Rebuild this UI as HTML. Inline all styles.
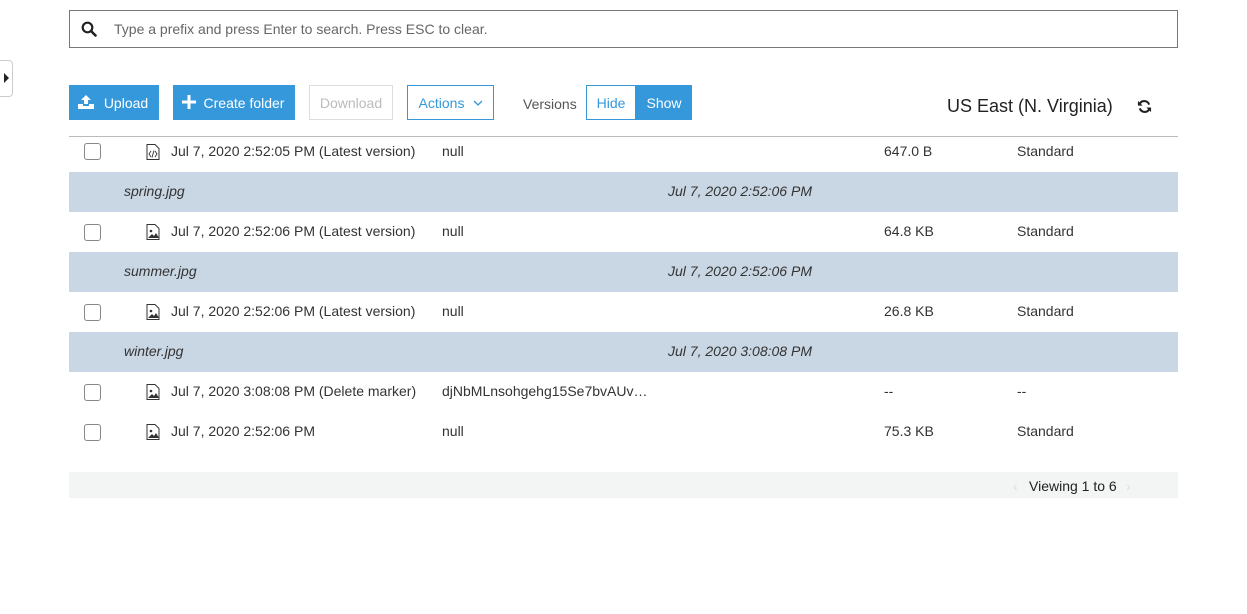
<!DOCTYPE html>
<html><head><meta charset="utf-8"><style>
*{box-sizing:border-box;margin:0;padding:0}
body{width:1247px;height:614px;background:#fff;font-family:"Liberation Sans",sans-serif;font-size:14px;color:#333;position:relative;overflow:hidden}
.a{position:absolute}
.btn{position:absolute;top:85px;height:35px;line-height:36px;font-size:14px;text-align:center}
.blue{background:#3498db;color:#fff}
.row{position:absolute;left:69px;width:1109px;height:40px;line-height:39px}
.row span{position:absolute;white-space:nowrap}
.grp{background:#c9d6e3;font-style:italic}
.cb{position:absolute;left:15px;top:12px;width:17px;height:17px;border:1px solid #888;border-radius:3px;background:#fff}
.ic{position:absolute;left:77px;top:12px}
</style></head><body>
<div class="a" style="left:0;top:60px;width:13px;height:37px;border:1px solid #ccc;border-left:none;border-radius:0 4px 4px 0"></div>
<div class="a" style="left:4px;top:73px;width:0;height:0;border-left:5px solid #222;border-top:5px solid transparent;border-bottom:5px solid transparent"></div>

<div class="a" style="left:69px;top:10px;width:1109px;height:38px;border:1px solid #777"></div>
<svg class="a" style="left:81px;top:21px" width="16" height="16" viewBox="0 0 16 16"><circle cx="6.5" cy="6.5" r="4.8" fill="none" stroke="#222" stroke-width="2.2"/><path d="M10 10l4.5 4.5" stroke="#222" stroke-width="2.6" stroke-linecap="round"/></svg>
<div class="a" style="left:114px;top:21px;color:#666;font-size:14px">Type a prefix and press Enter to search. Press ESC to clear.</div>

<div class="btn blue" style="left:69px;width:90px;padding-left:24px">Upload</div>
<svg class="a" style="left:78px;top:95px" width="16" height="14" viewBox="0 0 16 14"><path d="M8 0L3 5h3v4h4V5h3z M0 9h5v2h6V9h5v5H0z" fill="#fff"/></svg>
<div class="btn blue" style="left:173px;width:122px;padding-left:20px">Create folder</div>
<svg class="a" style="left:182px;top:95px" width="14" height="14" viewBox="0 0 14 14"><path d="M5.5 0h3v5.5H14v3H8.5V14h-3V8.5H0v-3h5.5z" fill="#fff"/></svg>
<div class="btn" style="left:309px;width:84px;border:1px solid #ddd;color:#bbb;line-height:34px">Download</div>
<div class="btn" style="left:407px;width:87px;border:1px solid #3498db;color:#3498db;line-height:34px;padding-right:18px">Actions</div>
<svg class="a" style="left:473px;top:100px" width="10" height="7" viewBox="0 0 10 7"><path d="M1 1l4 4 4-4" fill="none" stroke="#3498db" stroke-width="1.3"/></svg>
<div class="a" style="left:523px;top:96px;color:#555">Versions</div>
<div class="btn" style="left:586px;width:50px;border:1px solid #3498db;color:#3498db;line-height:34px">Hide</div>
<div class="btn blue" style="left:636px;width:56px">Show</div>
<div class="a" style="left:947px;top:96px;font-size:18px;color:#222">US East (N. Virginia)</div>
<svg class="a" style="left:1137px;top:99px" width="15" height="15" viewBox="0 0 16 16"><path d="M13 6A5.5 5.5 0 0 0 3 5" fill="none" stroke="#222" stroke-width="2.2"/><path d="M1 2v5h5z" fill="#222"/><path d="M3 10a5.5 5.5 0 0 0 10 1" fill="none" stroke="#222" stroke-width="2.2"/><path d="M15 14V9h-5z" fill="#222"/></svg>

<div class="a" style="left:69px;top:136px;width:1109px;height:1px;background:#bbb"></div>

<div class="row" style="top:131px;line-height:40px"><div class="cb"></div>
<svg class="ic" style="top:13px" width="14" height="16" viewBox="0 0 14 16"><path d="M1 .5h8l4 4v11H1z" fill="none" stroke="#333"/><path d="M5 7L3 10l2 3M9 7l2 3-2 3M8 6.5l-2 7" fill="none" stroke="#333" stroke-width=".9"/></svg>
<span style="left:102px;top:0">Jul 7, 2020 2:52:05 PM (Latest version)</span><span style="left:373px">null</span><span style="left:815px">647.0 B</span><span style="left:948px">Standard</span></div>

<div class="row grp" style="top:172px"><span style="left:55px">spring.jpg</span><span style="left:599px">Jul 7, 2020 2:52:06 PM</span></div>
<div class="row" style="top:212px"><div class="cb"></div>
<svg class="ic" width="14" height="16" viewBox="0 0 14 16"><path d="M1 .5h8l4 4v11H1z" fill="none" stroke="#333"/><circle cx="5" cy="7" r="1.3" fill="#333"/><path d="M2 14l4-4 2 2 2-3 3 5z" fill="#333"/></svg>
<span style="left:102px">Jul 7, 2020 2:52:06 PM (Latest version)</span><span style="left:373px">null</span><span style="left:815px">64.8 KB</span><span style="left:948px">Standard</span></div>

<div class="row grp" style="top:252px"><span style="left:55px">summer.jpg</span><span style="left:599px">Jul 7, 2020 2:52:06 PM</span></div>
<div class="row" style="top:292px"><div class="cb"></div>
<svg class="ic" width="14" height="16" viewBox="0 0 14 16"><path d="M1 .5h8l4 4v11H1z" fill="none" stroke="#333"/><circle cx="5" cy="7" r="1.3" fill="#333"/><path d="M2 14l4-4 2 2 2-3 3 5z" fill="#333"/></svg>
<span style="left:102px">Jul 7, 2020 2:52:06 PM (Latest version)</span><span style="left:373px">null</span><span style="left:815px">26.8 KB</span><span style="left:948px">Standard</span></div>

<div class="row grp" style="top:332px"><span style="left:55px">winter.jpg</span><span style="left:599px">Jul 7, 2020 3:08:08 PM</span></div>
<div class="row" style="top:372px"><div class="cb"></div>
<svg class="ic" width="14" height="16" viewBox="0 0 14 16"><path d="M1 .5h8l4 4v11H1z" fill="none" stroke="#333"/><circle cx="5" cy="7" r="1.3" fill="#333"/><path d="M2 14l4-4 2 2 2-3 3 5z" fill="#333"/></svg>
<span style="left:102px">Jul 7, 2020 3:08:08 PM (Delete marker)</span><span style="left:373px">djNbMLnsohgehg15Se7bvAUv…</span><span style="left:815px">--</span><span style="left:948px">--</span></div>
<div class="row" style="top:412px"><div class="cb"></div>
<svg class="ic" width="14" height="16" viewBox="0 0 14 16"><path d="M1 .5h8l4 4v11H1z" fill="none" stroke="#333"/><circle cx="5" cy="7" r="1.3" fill="#333"/><path d="M2 14l4-4 2 2 2-3 3 5z" fill="#333"/></svg>
<span style="left:102px">Jul 7, 2020 2:52:06 PM</span><span style="left:373px">null</span><span style="left:815px">75.3 KB</span><span style="left:948px">Standard</span></div>

<div class="a" style="left:69px;top:472px;width:1109px;height:26px;background:#f3f4f4"></div>
<div class="a" style="left:1013px;top:478px;color:#ddd">‹</div>
<div class="a" style="left:1029px;top:478px;color:#222">Viewing 1 to 6</div>
<div class="a" style="left:1126px;top:478px;color:#ddd">›</div>
</body></html>
